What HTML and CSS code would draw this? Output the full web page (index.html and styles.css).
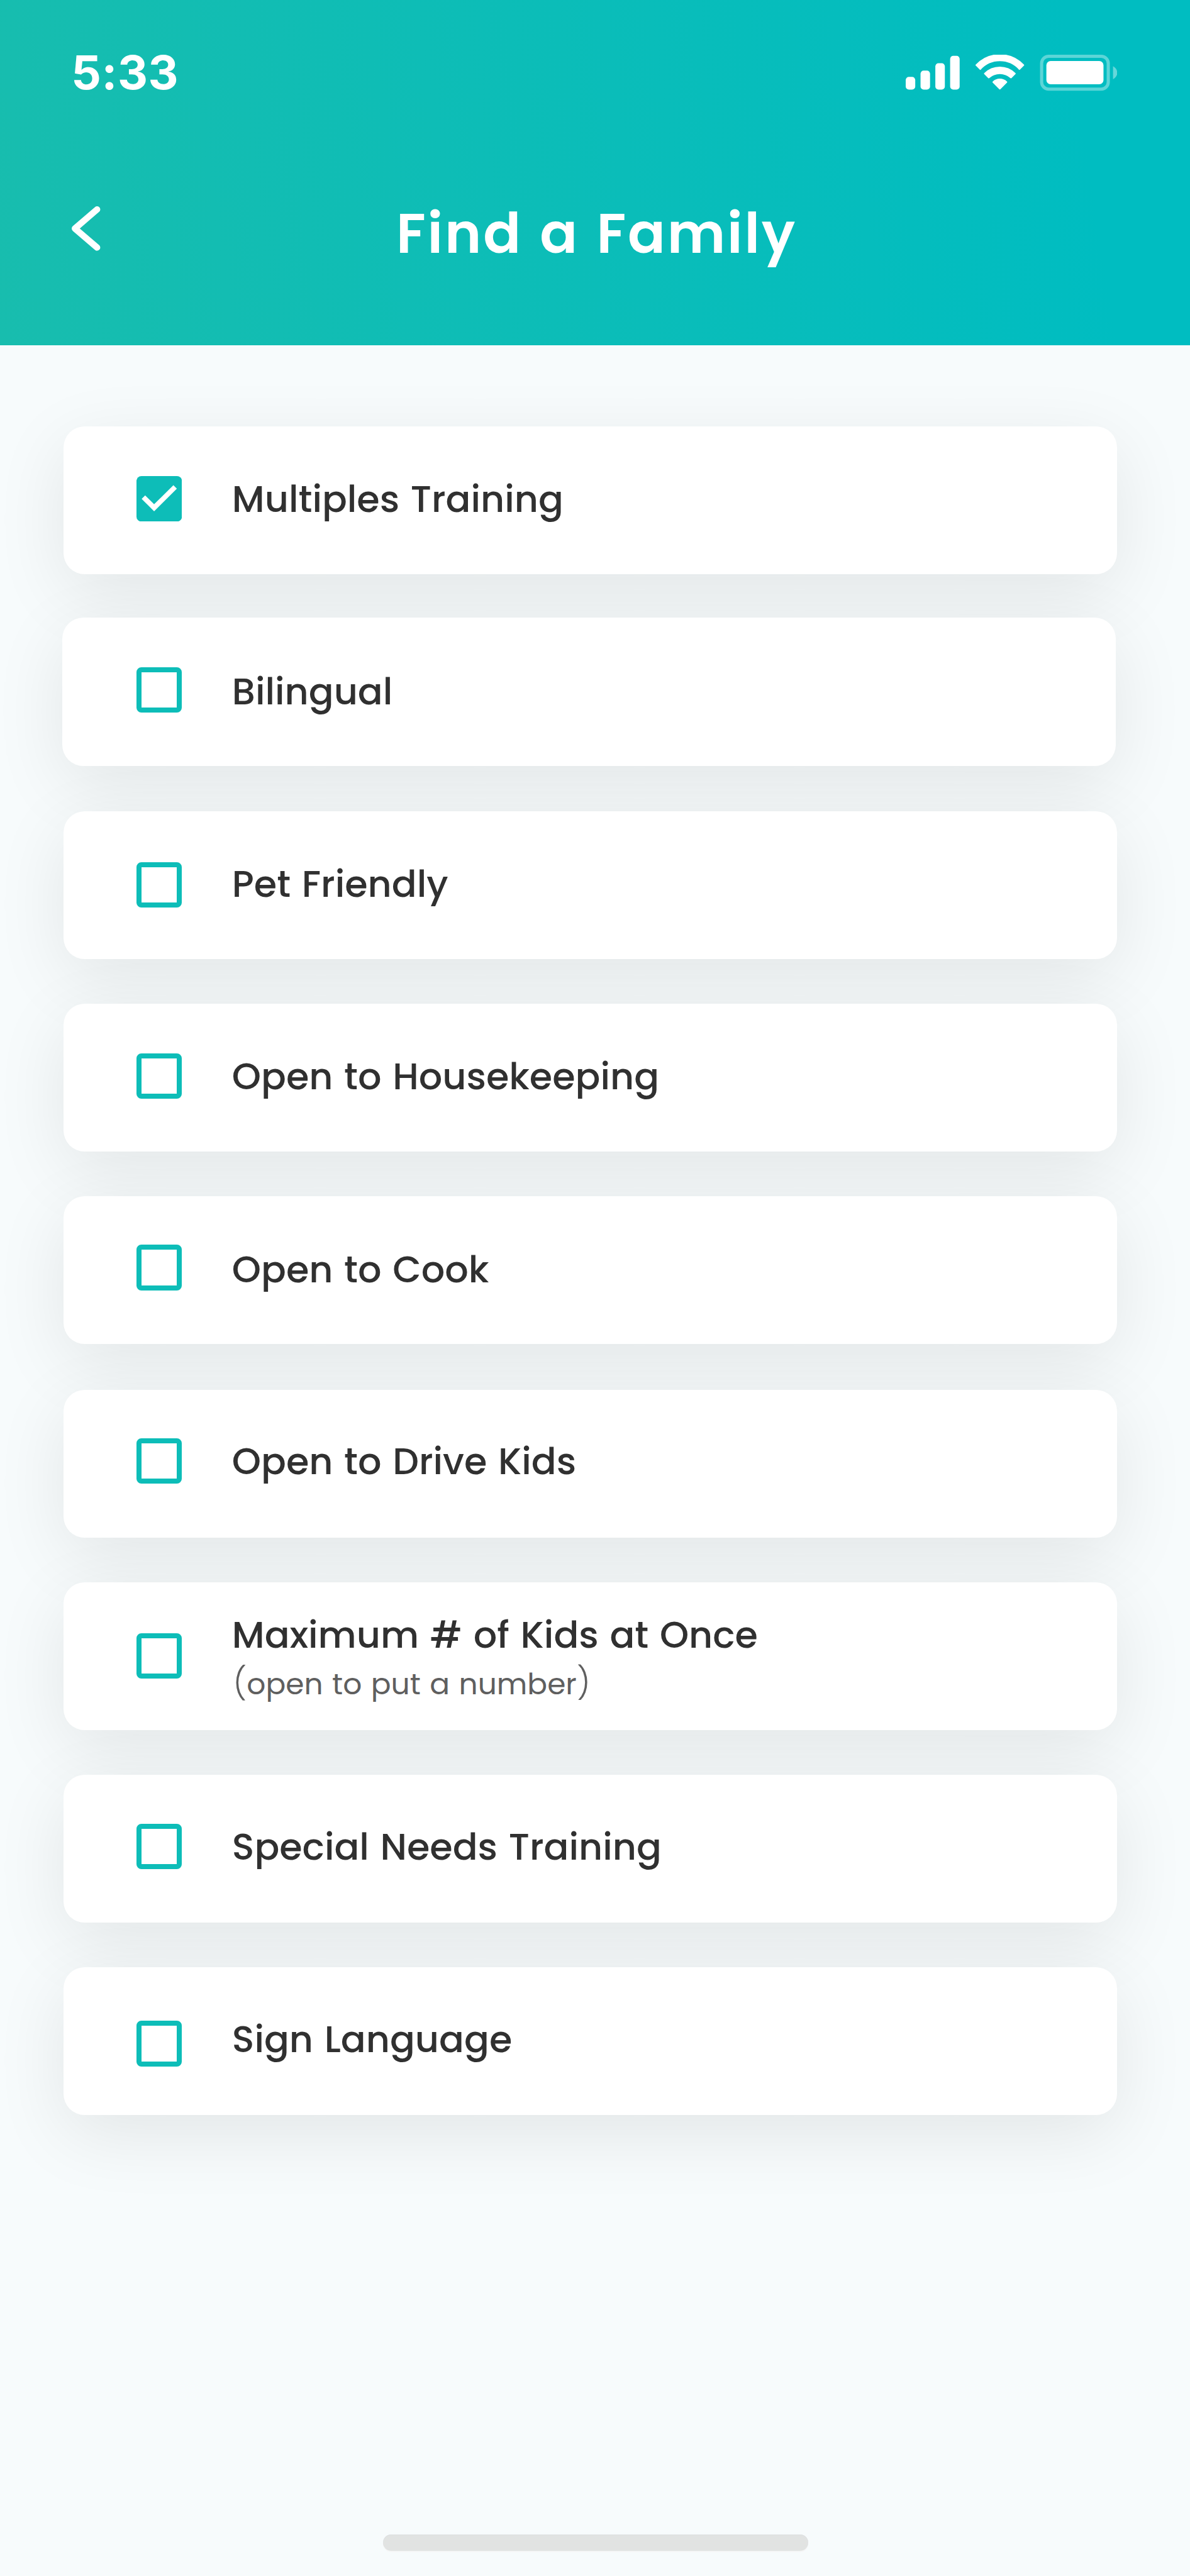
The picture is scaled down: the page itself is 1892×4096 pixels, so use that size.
FILE: index.html
```html
<!DOCTYPE html>
<html lang="en">
<head>
<meta charset="utf-8">
<title>Find a Family</title>
<link rel="stylesheet" href="styles.css">
</head>
<body>
<div class="screen">
  <header class="header">
    <div class="status-bar">
      <span class="time">5:33</span>
      <svg class="status-icons" viewBox="2568 156 600 102" fill="#fff" aria-hidden="true">
        <rect x="2568" y="219" width="27" height="36" rx="9"/>
        <rect x="2610" y="201" width="27" height="54" rx="9"/>
        <rect x="2652" y="180" width="27" height="75" rx="9"/>
        <rect x="2694" y="159" width="27" height="96" rx="9"/>
        <g stroke="#fff" stroke-width="4" stroke-linejoin="round">
          <path d="M2768 185.500A92 92 0 0 1 2902 185.500L2890.500 197A75 75 0 0 0 2779.500 197Z"/>
          <path d="M2792 209.500A61 61 0 0 1 2878 209.500L2866.500 221A47 47 0 0 0 2803.500 221Z"/>
          <path d="M2816 233.500A27.500 27.500 0 0 1 2854 233.500L2835 252.500Z"/>
        </g>
        <rect x="2953.500" y="160.500" width="189" height="93" rx="20" fill="none" stroke="#fff" stroke-width="9" opacity=".36"/>
        <rect x="2967" y="174" width="162" height="66" rx="12"/>
        <path d="M3156 188.500C3163 192 3168 199 3168 207S3163 222 3156 225.500Z" opacity=".4"/>
      </svg>
    </div>
    <div class="nav-bar">
      <svg class="back" viewBox="204 585 81 126" fill="none" stroke="#fff" stroke-width="18" stroke-linecap="round" stroke-linejoin="round" role="img" aria-label="Back">
        <path d="M276 594L213 648L276 702"/>
      </svg>
      <h1 class="title">Find a Family</h1>
    </div>
  </header>

  <main class="options">
    <div class="card">
      <svg class="box" viewBox="0 0 129 129" aria-hidden="true">
        <rect width="129" height="129" rx="14" fill="#0dbdb8"/>
        <path d="M14.700 64.500L24.600 54.700L50 80L104.700 25.700L114.500 35.700L50 100Z" fill="#fff"/>
      </svg>
      <div class="text"><div class="label">Multiples Training</div></div>
    </div>
    <div class="card">
      <span class="box box-empty"></span>
      <div class="text"><div class="label">Bilingual</div></div>
    </div>
    <div class="card">
      <span class="box box-empty"></span>
      <div class="text"><div class="label">Pet Friendly</div></div>
    </div>
    <div class="card">
      <span class="box box-empty"></span>
      <div class="text"><div class="label">Open to Housekeeping</div></div>
    </div>
    <div class="card">
      <span class="box box-empty"></span>
      <div class="text"><div class="label">Open to Cook</div></div>
    </div>
    <div class="card">
      <span class="box box-empty"></span>
      <div class="text"><div class="label">Open to Drive Kids</div></div>
    </div>
    <div class="card">
      <span class="box box-empty"></span>
      <div class="text">
        <div class="label">Maximum # of Kids at Once</div>
        <div class="hint"><span class="paren">(</span>open to put a number<span class="paren">)</span></div>
      </div>
    </div>
    <div class="card">
      <span class="box box-empty"></span>
      <div class="text"><div class="label">Special Needs Training</div></div>
    </div>
    <div class="card">
      <span class="box box-empty"></span>
      <div class="text"><div class="label">Sign Language</div></div>
    </div>
  </main>

  <div class="home-indicator"></div>
</div>
</body>
</html>
```
FILE: styles.css
```css
:root {
  --u: 0.56059px; /* one design unit; the screen is 3375 units wide */
  --teal: #0dbdb8;
}

* { box-sizing: border-box; }

body {
  margin: 0;
  background: #f7fbfc;
  font-family: Poppins, Inter, "Noto Sans", sans-serif;
  color: #303030;
}

.screen {
  display: flex;
  flex-direction: column;
  height: 4096px;
  overflow: hidden;
}

.header {
  flex: none;
  height: calc(980 * var(--u));
  background: linear-gradient(81.5deg, #18bdae 0%, #00bdc1 90%, #00bdc1 100%);
  color: #fff;
}

.status-bar {
  display: flex;
  align-items: center;
  justify-content: space-between;
  height: calc(414 * var(--u));
  padding: 0 calc(207 * var(--u)) 0 calc(202 * var(--u));
}

.time {
  font: 700 74.5px/1.2 Inter, "Liberation Sans", sans-serif;
  letter-spacing: 0.6px;
}

.status-icons {
  width: calc(600 * var(--u));
  height: calc(102 * var(--u));
}

.nav-bar {
  display: flex;
  align-items: flex-start;
  padding: 0 calc(204 * var(--u));
}

.back {
  flex: none;
  width: calc(81 * var(--u));
  height: calc(126 * var(--u));
  margin-top: calc(171 * var(--u));
}

.title {
  flex: 1;
  margin: calc(130.6 * var(--u)) 0 0;
  padding-right: calc(72 * var(--u));
  font-size: 88.3px;
  font-weight: 600;
  line-height: 1.5;
  letter-spacing: 2.82px;
  word-spacing: 3.6px;
  text-align: center;
  white-space: nowrap;
}

.options {
  display: flex;
  flex-direction: column;
  gap: calc(126 * var(--u));
  padding: calc(229 * var(--u)) calc(207 * var(--u)) 0 calc(180 * var(--u));
}

.card {
  --box-y: 141;
  --label-y: 129.5;
  display: flex;
  align-items: flex-start;
  gap: calc(142 * var(--u));
  height: calc(420 * var(--u));
  padding-left: calc(207 * var(--u));
  border-radius: calc(60 * var(--u));
  background: #fff;
  box-shadow: 0 calc(54 * var(--u)) calc(205 * var(--u)) rgba(0, 0, 0, 0.088);
}

.card:nth-child(2) {
  --label-y: 131.3;
  margin: calc(-3 * var(--u)) calc(3 * var(--u)) calc(3 * var(--u)) calc(-3 * var(--u));
  padding-left: calc(210 * var(--u));
}
.card:nth-child(3) { --box-y: 144.5; }
.card:nth-child(4) { --label-y: 128.3; }
.card:nth-child(5) { --box-y: 138; --label-y: 130.3; }
.card:nth-child(6) { --box-y: 138; --label-y: 126.1; margin-top: calc(3 * var(--u)); }
.card:nth-child(7) { --box-y: 144; --label-y: 71.5; }
.card:nth-child(8) { --box-y: 138.5; --label-y: 126.5; }
.card:nth-child(9) { --box-y: 152.5; --label-y: 126.5; }

.box {
  flex: none;
  width: calc(129 * var(--u));
  height: calc(129 * var(--u));
  margin-top: calc(var(--box-y) * var(--u));
}

.box-empty {
  border: calc(14.3 * var(--u)) solid var(--teal);
  border-radius: calc(14 * var(--u));
}

.text {
  padding-top: calc(var(--label-y) * var(--u));
  white-space: nowrap;
}

.label {
  font-size: 58.86px;
  font-weight: 500;
  line-height: 1.5;
  word-spacing: 2.4px;
}

.hint {
  height: calc(126 * var(--u));
  margin-top: calc(-2 * var(--u));
  padding-left: 2px;
  font-size: 47.09px;
  line-height: calc(126 * var(--u));
  word-spacing: 1.9px;
  color: #5f5f5f;
}

.paren {
  font-size: 51px;
  font-weight: 300;
  line-height: 1;
}

.home-indicator {
  flex: none;
  width: calc(1206 * var(--u));
  height: calc(45 * var(--u));
  margin: auto auto calc(72 * var(--u)) calc(1086 * var(--u));
  border-radius: calc(23 * var(--u));
  background: #e1e3e2;
  box-shadow: inset 0 1px #dddfe0, 0 2px #f5f6f6;
}
```
